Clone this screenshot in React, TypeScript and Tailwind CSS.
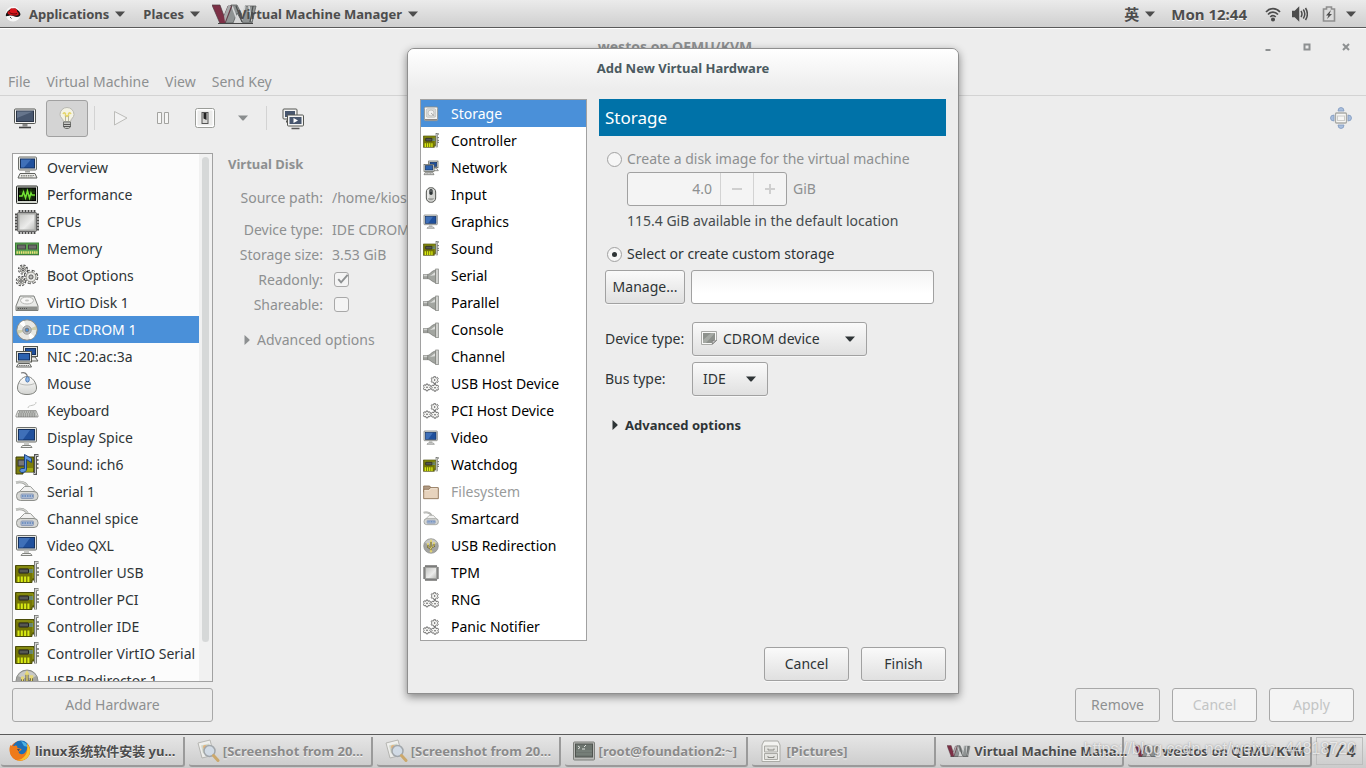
import type { ReactNode } from "react";

type IconName =
  | "computer"
  | "graph"
  | "chip"
  | "ram"
  | "gears"
  | "disk"
  | "cd"
  | "network"
  | "mouse"
  | "keyboard"
  | "display"
  | "soundCard"
  | "serial"
  | "card"
  | "usb"
  | "storage"
  | "input"
  | "plug"
  | "cogs"
  | "folder";

const HARDWARE: { label: string; icon: IconName }[] = [
  { label: "Overview", icon: "computer" },
  { label: "Performance", icon: "graph" },
  { label: "CPUs", icon: "chip" },
  { label: "Memory", icon: "ram" },
  { label: "Boot Options", icon: "gears" },
  { label: "VirtIO Disk 1", icon: "disk" },
  { label: "IDE CDROM 1", icon: "cd" },
  { label: "NIC :20:ac:3a", icon: "network" },
  { label: "Mouse", icon: "mouse" },
  { label: "Keyboard", icon: "keyboard" },
  { label: "Display Spice", icon: "display" },
  { label: "Sound: ich6", icon: "soundCard" },
  { label: "Serial 1", icon: "serial" },
  { label: "Channel spice", icon: "serial" },
  { label: "Video QXL", icon: "display" },
  { label: "Controller USB", icon: "card" },
  { label: "Controller PCI", icon: "card" },
  { label: "Controller IDE", icon: "card" },
  { label: "Controller VirtIO Serial", icon: "card" },
  { label: "USB Redirector 1", icon: "usb" },
];

const NEW_HARDWARE: { label: string; icon: IconName; disabled?: boolean }[] = [
  { label: "Storage", icon: "storage" },
  { label: "Controller", icon: "card" },
  { label: "Network", icon: "network" },
  { label: "Input", icon: "input" },
  { label: "Graphics", icon: "display" },
  { label: "Sound", icon: "card" },
  { label: "Serial", icon: "plug" },
  { label: "Parallel", icon: "plug" },
  { label: "Console", icon: "plug" },
  { label: "Channel", icon: "plug" },
  { label: "USB Host Device", icon: "cogs" },
  { label: "PCI Host Device", icon: "cogs" },
  { label: "Video", icon: "display" },
  { label: "Watchdog", icon: "card" },
  { label: "Filesystem", icon: "folder", disabled: true },
  { label: "Smartcard", icon: "serial" },
  { label: "USB Redirection", icon: "usb" },
  { label: "TPM", icon: "chip" },
  { label: "RNG", icon: "cogs" },
  { label: "Panic Notifier", icon: "cogs" },
];

const CHIP_PINS = [4.5, 7.5, 10.5, 13.5, 16.5, 19.5];

function Gear({ x, y, r }: { x: number; y: number; r: number }) {
  return (
    <g transform={`translate(${x} ${y})`}>
      <circle r={r} fill="none" stroke="#4a4a4a" strokeWidth="3" strokeDasharray={`${r * 0.48} ${r * 0.3054}`} />
      <circle r={r - 0.2} fill="none" stroke="#e4e4e1" strokeWidth="1.6" strokeDasharray={`${r * 0.36} ${r * 0.4254}`} />
      <circle r={r - 0.9} fill="#e9e9e6" stroke="#77776f" strokeWidth="0.7" />
      <circle r={r * 0.36} fill="#b9b9b6" stroke="#444" strokeWidth="0.8" />
    </g>
  );
}

function Cog({ x, y }: { x: number; y: number }) {
  return (
    <g transform={`translate(${x} ${y})`}>
      <path
        d="M-1.4 -5h2.8v1.6l1.6 .4 1.2-.9 1.2 2.2-1 .9v1.6l1 .9-1.2 2.2-1.2-.9-1.6.8v1.5h-2.8v-1.5l-1.6-.8-1.2.9-1.2-2.2 1-.9v-1.6l-1-.9 1.2-2.2 1.2.9 1.6-.4z"
        fill="#f4f4f2"
        stroke="#4d4d4d"
        strokeWidth="1.1"
      />
      <circle r="1.1" fill="#444" />
    </g>
  );
}

const DRAWINGS: Record<IconName, ReactNode> = {
  computer: (
    <>
      <rect x="3.5" y="1" width="18" height="13" rx="1" fill="#e3e4e0" stroke="#6b6d69" />
      <rect x="5.5" y="3" width="14" height="9" fill="#20509c" stroke="#14305f" />
      <path d="M6 3.5h10L9 11.5H6z" fill="#4d7dc4" opacity="0.7" />
      <path d="M10 14.5h5v2h-5z" fill="#a5a7a3" />
      <path d="M5 17.5h15l2 4.5H3z" fill="#ececea" stroke="#5f615d" />
      <path d="M6 19.5h13M6 21h12" stroke="#85877f" strokeDasharray="1.5 .8" />
    </>
  ),
  graph: (
    <>
      <rect x="1.5" y="3" width="21" height="17.5" rx="1" fill="#d3d7cf" stroke="#2c2e2b" />
      <rect x="3.5" y="5" width="17" height="12.5" fill="#11220a" stroke="#000" />
      <path d="M4 9h16M4 13h16M8 5.5v12M12 5.5v12M16 5.5v12" stroke="#285512" strokeWidth=".7" />
      <path d="M4 13h3l1.5-4 2 6 2-7 2 7 1.5-5 1 2H20" fill="none" stroke="#73e234" strokeWidth="1.5" />
    </>
  ),
  chip: (
    <>
      <g stroke="#4c4c4a" strokeWidth="1.8">
        {CHIP_PINS.map((p) => (
          <path key={p} d={`M${p} 0v24M0 ${p}h24`} />
        ))}
      </g>
      <rect x="2.5" y="2.5" width="19" height="19" rx="1" fill="#a8a9a6" stroke="#666" />
      <rect x="4.5" y="4.5" width="15" height="15" fill="url(#silver)" />
    </>
  ),
  ram: (
    <>
      <rect x=".5" y="6" width="23" height="11.5" fill="#5ba350" stroke="#3c8038" />
      <rect x="2.5" y="8" width="8" height="4" fill="#6c6e6a" stroke="#444" />
      <rect x="13.5" y="8" width="8" height="4" fill="#6c6e6a" stroke="#444" />
      <path d="M1.5 15.5h21" stroke="#f1e379" strokeWidth="2.6" strokeDasharray="1.4 .8" />
      <path d="M0 18.5h24" stroke="#c9cac7" />
    </>
  ),
  gears: (
    <>
      <Gear x={8} y={5.5} r={3.6} />
      <Gear x={6} y={17} r={3.8} />
      <Gear x={16} y={13} r={5.8} />
    </>
  ),
  disk: (
    <>
      <path d="M5 5h14l4 10v4.500H1V15z" fill="#e9eae8" stroke="#7c7e7a" />
      <ellipse cx="12" cy="9.5" rx="6.5" ry="3.5" fill="#f7f7f6" stroke="#b5b6b3" />
      <ellipse cx="12" cy="9.5" rx="2" ry="1" fill="#c3c4c1" />
      <path d="M1.5 15.5h21V19h-21z" fill="#8e908c" />
      <path d="M3 17.5h9" stroke="#555" strokeDasharray="1 1" />
    </>
  ),
  cd: (
    <>
      <circle cx="12" cy="12" r="10.2" fill="#e8e8e3" stroke="#8a8a84" />
      <path d="M12 12L4.5 5.5A10 10 0 0 1 9 2.8zM12 12l7.500 6.500a10 10 0 0 1-4.500 2.800z" fill="#fff" />
      <path d="M12 12L21 8a10 10 0 0 1 .8 4zM12 12L3 16a10 10 0 0 1-.8-4z" fill="#cfcfae" />
      <circle cx="12" cy="12" r="4.2" fill="#b9c0c8" stroke="#9b9b97" />
      <circle cx="12" cy="12" r="1.9" fill="#4a90d9" stroke="#777" />
    </>
  ),
  network: (
    <>
      <rect x="8.5" y="1.5" width="14" height="10" fill="#e3e4e0" stroke="#55574f" />
      <rect x="10.5" y="3.5" width="10" height="6" fill="#20509c" stroke="#14305f" />
      <path d="M14 12h6l3 4H12z" fill="#ececea" stroke="#5f615d" />
      <rect x="1.5" y="6.5" width="15" height="10.5" fill="#e3e4e0" stroke="#55574f" />
      <rect x="3.5" y="8.5" width="11" height="6.5" fill="#2c62b0" stroke="#14305f" />
      <path d="M3.5 18.5h11l2 3.5h-15z" fill="#ececea" stroke="#5f615d" />
      <path d="M4 20.5h10" stroke="#777" strokeDasharray="1.5 .7" />
    </>
  ),
  mouse: (
    <>
      <path d="M6 1c3-1 6 0 6.500 4" fill="none" stroke="#777" strokeWidth="1.2" />
      <path
        d="M12 4.500c5 0 9.500 6 9.500 11.500 0 4.500-4 6.500-9.500 6.500S2.500 20.500 2.500 16C2.500 10.500 7 4.500 12 4.500z"
        fill="url(#paper)"
        stroke="#80827e"
      />
      <path d="M4.500 11.500c4 2 11 2 15 0" fill="none" stroke="#b9bab7" />
      <ellipse cx="12.5" cy="7.5" rx="1.8" ry="2.6" fill="#8db6e8" stroke="#4a78b4" />
    </>
  ),
  keyboard: (
    <>
      <path d="M13 9c0-4 8-1 8-6" fill="none" stroke="#c4c5c2" />
      <path d="M3 11.500h18l2 5v1.500H1v-1.500z" fill="#d9dad7" stroke="#8a8c88" strokeWidth=".8" />
      <path d="M4 13h16.500M3 15h18M3 17h18.500" stroke="#5f615d" strokeWidth="1.2" strokeDasharray="1.700 .5" />
    </>
  ),
  display: (
    <>
      <rect x="1.5" y="1.5" width="20" height="14.5" rx="1" fill="#e3e4e0" stroke="#6b6d69" />
      <rect x="3.5" y="3.5" width="16" height="10.5" fill="#20509c" stroke="#14305f" />
      <path d="M4 4h11L8 13.500H4z" fill="#4d7dc4" opacity="0.7" />
      <path d="M9 16.500h5v3H9z" fill="#c7c8c5" />
      <path d="M7.500 19.500h8l1.500 2H6z" fill="#f2f2f1" stroke="#80827e" />
    </>
  ),
  soundCard: (
    <>
      <path d="M1 4h18v15H8v2H1z" fill="#7b7d0c" stroke="#3b3c08" />
      <rect x="3" y="7" width="7" height="6" fill="#777" stroke="#333" />
      <path d="M10 18h8M11 16h7" stroke="#c8d51b" />
      <path d="M23.500 2.500h-3v18h-2" fill="none" stroke="#555" strokeWidth="3" />
      <path d="M23.500 2.500h-3v18h-1.500" fill="none" stroke="#c9cac7" />
      <path d="M21.500 7h2M21.500 11h2M21.500 15h2" stroke="#555" strokeWidth="1.5" />
      <path
        d="M9.500 15.500v-14l7 4v4l-5-3v9.500c0 2.500-2 3.500-4.500 3.500s-3.500-3.500 0-4z"
        fill="#5d94dc"
        stroke="#1e4480"
      />
    </>
  ),
  serial: (
    <>
      <path d="M1 2.500c5-1 10 0 12 5" fill="none" stroke="#9b9d99" strokeWidth="2.5" />
      <path d="M1 2.200c5-1 10 0 12 5" fill="none" stroke="#d5d6d3" strokeWidth="1.2" />
      <path d="M9.500 6.500h6l6 6.500H3z" fill="#f0f0ef" stroke="#9b9d99" />
      <rect x="1.5" y="11.5" width="21.5" height="9" rx="4" fill="#d6d7d4" stroke="#8e908c" />
      <rect x="6" y="14" width="12.5" height="4.5" rx="1" fill="#a9b8d2" stroke="#8d9cb8" />
      <path d="M7 16h11" stroke="#5f86bd" strokeWidth="1.6" strokeDasharray="1.500 1" />
    </>
  ),
  card: (
    <>
      <path d="M.5 4.500h18.500V19H17v2.500H.5z" fill="#737506" stroke="#4a4c08" />
      <path d="M2 6h16v11" fill="none" stroke="#98a01a" />
      <rect x="4" y="8" width="9.5" height="4" rx=".5" fill="#555753" stroke="#222" />
      <path d="M14 9h4M14 11h4" stroke="#5d94dc" />
      <path
        d="M3.500 15.500v5.500M6.800 15.500v5.500M10.100 15.500v5.500M13.400 15.500v5.500"
        stroke="#d7ea14"
        strokeWidth="2"
      />
      <path d="M23.500 1.500h-3v20" fill="none" stroke="#6c6e6a" strokeWidth="3" />
      <path d="M23.500 1.500h-3v20" fill="none" stroke="#d3d4d1" strokeWidth="1.3" />
      <path d="M21.500 7h2.500M21.500 11h2.500M21.500 14h2.500" stroke="#6c6e6a" strokeWidth="1.5" />
    </>
  ),
  usb: (
    <>
      <circle cx="12" cy="12" r="11" fill="#a3a4a1" stroke="#8b8d89" />
      <path d="M3 7a10.500 10.500 0 0 1 18 0c-5 3-13 3-18 0z" fill="#c8c9c6" />
      <path
        d="M12 4v16M7.500 9v4l4.500 3.500M16.500 8v4L12 14.500"
        fill="none"
        stroke="#5c5636"
        strokeWidth="3"
      />
      <g stroke="#e6d877" strokeWidth="1.4" fill="#e6d877">
        <path d="M12 4v16M7.500 9v4l4.500 3.500M16.500 8v4L12 14.500" fill="none" />
        <path d="M12 2.500l1.500 2.500h-3z" />
        <circle cx="7.5" cy="9" r="1" />
        <path d="M15.500 7h2v1.500h-2z" />
        <circle cx="12" cy="20" r="1.3" />
      </g>
    </>
  ),
  storage: (
    <>
      <rect x="2" y="1.5" width="20" height="20.5" rx="2" fill="#f4f4f3" stroke="#8b8d89" strokeWidth="1.4" />
      <rect x="5" y="4" width="14" height="13" rx="2" fill="#d9dad8" stroke="#bbbcba" />
      <circle cx="12" cy="10.5" r="4.5" fill="#f2f2f1" stroke="#b0b1af" />
      <path d="M12 10.500l5 4.500" stroke="#aaa" strokeWidth="1.5" />
      <path d="M3 20.500h18" stroke="#77706b" strokeWidth="1.5" />
    </>
  ),
  input: (
    <>
      <rect x="5" y="1" width="14" height="22" rx="6.5" fill="#d2d3d0" stroke="#555753" strokeWidth="1.5" />
      <path d="M7.500 4v14" stroke="#fff" strokeWidth="1.5" />
      <rect x="9.5" y="3" width="5" height="9" rx="2.5" fill="#2e3436" />
      <path d="M12 4.500v3" stroke="#aaa" />
      <path d="M7 17c2 4 8 4 10 0z" fill="#9c9e9a" />
    </>
  ),
  plug: (
    <>
      <path d="M0 10h7v6H0z" fill="#9fa19d" stroke="#7c7e7a" />
      <path d="M1 11.500h7" stroke="#dcdddb" strokeWidth="1.5" />
      <path d="M7 9.500c4 0 5-5 12-6.500v19c-7-2-8-6-12-6z" fill="#a2a5a0" stroke="#6f716d" />
      <path d="M10 12c3-1 5-4 8-5.500V11z" fill="#dddedc" />
      <rect x="19" y="1.5" width="4" height="22" fill="#d0d1ce" stroke="#7c7e7a" />
    </>
  ),
  cogs: (
    <>
      <Cog x={17.5} y={6} />
      <Cog x={6} y={17} />
      <Cog x={18} y={17.5} />
    </>
  ),
  folder: (
    <>
      <path d="M1 3h9l2 3h10v6H1z" fill="#b09a83" stroke="#8a6f54" strokeWidth="1.3" />
      <path d="M1 8h8l2-2.500h12V22H1z" fill="#e7d3bd" stroke="#8a6f54" strokeWidth="1.3" />
      <path d="M2.500 9.500h7l2-2.500h10" fill="none" stroke="#f8eee2" />
    </>
  ),
};

function Icon({ name, className }: { name: IconName; className: string }) {
  return (
    <svg viewBox="0 0 24 24" className={className} aria-hidden="true">
      {DRAWINGS[name]}
    </svg>
  );
}

function Caret({ className = "" }: { className?: string }) {
  return (
    <svg viewBox="0 0 10 6" className={`h-[6px] w-[10px] shrink-0 ${className}`} aria-hidden="true">
      <path d="M0 .5h10L5.500 5.500h-1z" fill="currentColor" />
    </svg>
  );
}

function RightCaret() {
  return (
    <svg viewBox="0 0 6 10" className="h-[10px] w-[6px] shrink-0" aria-hidden="true">
      <path d="M.5 0L5.500 4.500v1L.5 10z" fill="currentColor" />
    </svg>
  );
}

// a red V followed by two slanted metal strokes
function VmmLogo({ className }: { className: string }) {
  return (
    <svg viewBox="0 0 46 20" className={className} preserveAspectRatio="none" aria-hidden="true">
      <path d="M12 19L19 1h6l6 12 2-11h11l-4 17h-9l-6-10-4 10z" fill="#8f9393" stroke="#5b5e5e" strokeWidth=".8" />
      <path d="M20 2l6 16M33 2l-4 16M37 2l2 15" stroke="#d5d7d7" strokeWidth="1.6" />
      <path d="M24 2l6 16M41 2l-3 16" stroke="#4b4e4e" strokeWidth="1.2" />
      <path d="M0 1h8l4 11 4-10h4l-7 17.500H8z" fill="#7d3046" stroke="#4c3a40" strokeWidth=".7" />
      <path d="M12 12l4-10h3l-6 16z" fill="#a9adad" />
      <path d="M6 19.500h35" stroke="#444" />
    </svg>
  );
}

function RedHat() {
  return (
    <svg viewBox="0 0 16 16" className="mr-[2px] size-4" aria-hidden="true">
      <circle cx="8" cy="8" r="7.5" fill="#f7f7f7" />
      <path d="M.8 10A7.500 7.500 0 0 1 15.500 8c0 2-1.500 3-3.500 3-3 0-4-2-7-1.500-2 .4-3 1-4.200.5z" fill="#161616" />
      <path
        d="M2.500 7c0-1.500 1.300-2 2.200-1.600C4.800 3.500 5.500 1.800 7 2.300c1 .3 1.500.2 2.500 0 2-.3 2.500 1.700 2.800 3.700 1.800.8 2.200 3.200-.6 3.500C8 9.700 3 9 2.500 7z"
        fill="#d7141a"
      />
      <path d="M4.500 6.500c2 1.500 5 2 7.500 1" fill="none" stroke="#5c0709" />
      <path d="M5 11l1.500 1.500" stroke="#444" />
    </svg>
  );
}

function TopBar() {
  return (
    <header className="flex h-7 shrink-0 items-center border-b border-[#5a5a5a] bg-linear-to-b from-[#ebebeb] to-[#cfcfcf] text-[13px] font-bold text-[#4d4d4d] [text-shadow:0_1px_0_#f8f8f8]">
      <nav className="flex items-center">
        <button type="button" className="flex items-center gap-[6px] pl-[5px]">
          <RedHat />
          Applications
          <Caret />
        </button>
        <button type="button" className="ml-[18px] flex items-center gap-[6px]">
          Places
          <Caret />
        </button>
        <button type="button" className="ml-3 flex items-center">
          <VmmLogo className="h-5 w-[46px]" />
          <span className="-ml-5 mr-[6px]">Virtual Machine Manager</span>
          <Caret />
        </button>
      </nav>
      <div className="ml-auto flex items-center pr-[10px]">
        <button type="button" className="flex items-center gap-[6px] text-[15px]">
          英
          <Caret />
        </button>
        <time className="mr-[18px] ml-4 text-[15px]">Mon 12:44</time>
        <svg viewBox="0 0 16 16" className="size-4" fill="none" stroke="#4d4d4d" strokeWidth="1.7" aria-label="Wireless">
          <path d="M1 6c4-4.500 10-4.500 14 0M3 8.500c3-3.300 7-3.300 10 0M5.300 11c1.600-1.800 3.800-1.800 5.400 0" />
          <circle cx="8" cy="13.5" r="1.2" fill="#4d4d4d" />
        </svg>
        <svg
          viewBox="0 0 16 16"
          className="ml-[11px] size-4"
          fill="none"
          stroke="#4d4d4d"
          strokeWidth="1.5"
          aria-label="Volume"
        >
          <path d="M.5 5.500H3L6.500 2v12L3 10.500H.5z" fill="#4d4d4d" />
          <path d="M9 5c1.300 2 1.300 4 0 6M11.300 3.500c2 3 2 6 0 9M13.500 2c2.500 4 2.500 8 0 12" />
        </svg>
        <svg viewBox="0 0 14 16" className="ml-[14px] h-4 w-[14px]" aria-label="Battery charging">
          <path d="M4.500 1h5v2h3v12h-11V3h3z" fill="#dcdcdc" stroke="#8e8e8e" strokeWidth="1.6" />
          <path d="M9 4L4 9.500h2.500L5 13l5-5H7.500z" fill="#4d4d4d" />
        </svg>
        <Caret className="ml-[10px]" />
      </div>
    </header>
  );
}

function Toolbar() {
  return (
    <div className="flex h-11 items-center pl-1 text-[#8a8d8e]">
      <button type="button" aria-label="Console" className="grid h-[37px] w-[42px] place-items-center">
        <svg viewBox="0 0 24 24" className="size-6">
          <rect x="1.5" y="3" width="21" height="14.5" rx="1" fill="#f3f3f2" stroke="#555753" />
          <rect x="3.5" y="5" width="17" height="10.5" fill="#47566e" stroke="#2c3648" />
          <path d="M4 5.500h16L4 12z" fill="#66758c" />
          <path d="M9.500 18h5v2.500h-5z" fill="#888" />
          <path d="M6 21.500h12" stroke="#444" strokeWidth="1.6" />
        </svg>
      </button>
      <button
        type="button"
        aria-label="Details"
        aria-pressed="true"
        className="grid h-[37px] w-[42px] place-items-center rounded-[3px] border border-[#a1a1a1] bg-[#d4d4d4]"
      >
        <svg viewBox="0 0 24 24" className="size-6">
          <path
            d="M12 1.500a7 7 0 0 1 7 7c0 3-3 4-3.500 7h-7c-.5-3-3.500-4-3.500-7a7 7 0 0 1 7-7z"
            fill="#f4f3e4"
            stroke="#b9b9b3"
          />
          <path
            d="M8 8c1-2 3-1 2.500 1s1.500 2 1.500 0M12 9c0 2 2 2 1.500 0S15 6 16 8"
            fill="none"
            stroke="#e6d66b"
            strokeWidth="1.5"
          />
          <path d="M10.500 10v5M13.500 10v5" stroke="#b9b69d" />
          <path d="M8.500 16h7v5l-2 1.500h-3l-2-1.500z" fill="#c6c7c4" stroke="#70726e" />
          <path d="M8.500 18.500h7M8.500 20.500h7" stroke="#555" />
        </svg>
      </button>
      <span className="mx-[6px] h-6 w-px bg-[#d3d3d3]" />
      <button type="button" aria-label="Run" disabled className="grid w-10 place-items-center">
        <svg viewBox="0 0 16 16" className="size-4">
          <path d="M1.500 1.500v13.500L14 8z" fill="#f3f3f3" stroke="#bcbcb9" />
        </svg>
      </button>
      <button type="button" aria-label="Pause" disabled className="grid w-11 place-items-center">
        <svg viewBox="0 0 16 16" className="size-4">
          <path d="M2.500 2.500h4v11h-4zM9.500 2.500h4v11h-4z" fill="#f6f6f5" stroke="#a3a3a0" />
        </svg>
      </button>
      <button type="button" aria-label="Shut down" className="grid w-10 place-items-center">
        <svg viewBox="0 0 22 22" className="size-[22px]">
          <rect x="1.5" y="1.5" width="19" height="19" rx="2" fill="#fff" stroke="#9b9d99" />
          <rect x="3.5" y="3.5" width="15" height="15" fill="#ececeb" />
          <rect x="8" y="5.5" width="6" height="11" fill="#d9d9d7" stroke="#555" />
          <path d="M9.500 6h3v7l-3-1.500z" fill="#222" />
        </svg>
      </button>
      <button type="button" aria-label="Shut down options" className="grid w-9 place-items-center">
        <Caret />
      </button>
      <span className="mx-[5px] h-6 w-px bg-[#d3d3d3]" />
      <button type="button" aria-label="Snapshots" className="grid h-[37px] w-[42px] place-items-center">
        <svg viewBox="0 0 24 24" className="size-6">
          <rect x="2" y="3" width="14" height="10" rx="1" fill="#f3f3f2" stroke="#555753" />
          <rect x="4" y="5" width="10" height="6" fill="#47566e" />
          <path d="M5 15.500h2" stroke="#555" strokeWidth="2" />
          <rect x="6.5" y="9" width="16" height="11" rx="1" fill="#f3f3f2" stroke="#555753" />
          <rect x="8.5" y="11" width="12" height="7" fill="#47566e" />
          <path d="M12.500 12v5l4.500-2.500z" fill="#fff" />
          <path d="M10.500 22.500h8" stroke="#555" strokeWidth="1.5" />
        </svg>
      </button>
      <button type="button" aria-label="Fullscreen" className="mr-[13px] ml-auto">
        <svg viewBox="0 0 24 24" className="size-6">
          <path
            d="M9 5a3 3.500 0 0 1 6 0zM9 19a3 3.500 0 0 0 6 0zM5 9a3.500 3 0 0 0 0 6zM19 9a3.500 3 0 0 1 0 6z"
            fill="#a9bfdd"
            stroke="#8099bf"
            strokeWidth=".8"
          />
          <rect x="6.5" y="7" width="11" height="10" rx="1" fill="#f6f6f4" stroke="#a9aaa6" strokeWidth="1.3" />
          <rect x="8.5" y="10" width="7" height="4.5" fill="none" stroke="#ccccc9" />
        </svg>
      </button>
    </div>
  );
}

function HardwareList() {
  return (
    <aside className="flex w-[201px] shrink-0 flex-col gap-[6px]">
      <div className="flex min-h-0 flex-1 overflow-hidden border border-[#a1a1a1] bg-[#fcfcfc]">
        <ul className="min-w-0 flex-1">
          {HARDWARE.map((item) => (
            <li key={item.label}>
              <button
                type="button"
                className={`flex h-[27px] w-full items-center gap-2 pl-[2px] text-left whitespace-nowrap ${
                  item.label === "IDE CDROM 1" ? "bg-[#4a90d9] text-white" : "text-[#2e3436]"
                }`}
              >
                <Icon name={item.icon} className="size-6 shrink-0" />
                {item.label}
              </button>
            </li>
          ))}
        </ul>
        <div className="w-[13px] shrink-0 bg-[#f1f1f1] px-[3px] py-[3px]">
          <div className="h-[93%] rounded-full bg-[#d6d8d8]" />
        </div>
      </div>
      <button type="button" className="h-[34px] shrink-0 rounded-[3px] border border-[#a8a8a8] text-[#8d9091]">
        Add Hardware
      </button>
    </aside>
  );
}

const CHECKBOX = "size-[15px] appearance-none rounded-[3px] border border-[#a8a8a8] bg-[#f4f4f4]";

function DiskDetails() {
  return (
    <section className="pt-px text-[#8d9091]">
      <h2 className="text-[13px] font-bold">Virtual Disk</h2>
      <dl className="mt-[11px] grid grid-cols-[95px_auto] gap-x-[9px] leading-[25px]">
        <dt className="mb-[7px] text-right">Source path:</dt>
        <dd>/home/kiosk</dd>
        <dt className="text-right">Device type:</dt>
        <dd>IDE CDROM</dd>
        <dt className="text-right">Storage size:</dt>
        <dd>3.53 GiB</dd>
        <dt className="text-right">
          <label htmlFor="readonly">Readonly:</label>
        </dt>
        <dd className="flex items-center pl-[2px]">
          <input id="readonly" type="checkbox" defaultChecked className={CHECKBOX} />
          <svg viewBox="0 0 16 16" className="pointer-events-none -ml-[14px] size-[15px]" aria-hidden="true">
            <path d="M3.500 7.500l3 3.500 7-8" fill="none" stroke="#8d9091" strokeWidth="2" />
          </svg>
        </dd>
        <dt className="text-right">
          <label htmlFor="shareable">Shareable:</label>
        </dt>
        <dd className="flex items-center pl-[2px]">
          <input id="shareable" type="checkbox" className={CHECKBOX} />
        </dd>
      </dl>
      <button type="button" className="mt-[13px] ml-4 flex items-center gap-[7px]">
        <RightCaret />
        Advanced options
      </button>
    </section>
  );
}

const RAISED =
  "h-[34px] rounded-[3px] border border-[#a1a1a1] bg-linear-to-b from-[#fafafa] to-[#e0e0e0] text-[#2e3436] shadow-[0_1px_0_#f8f8f8]";

const RADIO =
  "grid size-[15px] shrink-0 appearance-none place-items-center rounded-full border border-[#a1a1a1] bg-[#f6f6f6] checked:before:size-[5px] checked:before:rounded-full checked:before:bg-[#2e3436]";

function StoragePage() {
  return (
    <section className="flex min-w-0 flex-1 flex-col text-[#2e3436]">
      <h2 className="flex h-[37px] items-center bg-[#0072a8] px-[6px] text-[17px] text-white">Storage</h2>

      <div className="flex flex-col pt-3 pr-3 pl-2">
        <label className="flex h-[22px] items-center gap-[5px] text-[#8d9091]">
          <input type="radio" name="source" className={RADIO} />
          Create a disk image for the virtual machine
        </label>
        <div className="mt-[2px] ml-5 flex items-center gap-[6px] text-[#8d9091]">
          <div className="flex h-[34px] w-[160px] rounded-[3px] border border-[#a1a1a1] bg-[#f4f4f4] text-[#8d9091]">
            <input
              aria-label="Disk size"
              type="text"
              defaultValue="4.0"
              className="w-[92px] bg-transparent pr-2 text-right outline-none"
            />
            <button type="button" aria-label="Decrease" className="grid flex-1 place-items-center border-l border-[#d3d3d3]">
              <svg viewBox="0 0 10 10" className="size-[10px]">
                <path d="M0 5h10" stroke="#cfcfcf" strokeWidth="2" />
              </svg>
            </button>
            <button type="button" aria-label="Increase" className="grid flex-1 place-items-center border-l border-[#d3d3d3]">
              <svg viewBox="0 0 10 10" className="size-[10px]">
                <path d="M0 5h10M5 0v10" stroke="#cfcfcf" strokeWidth="2" />
              </svg>
            </button>
          </div>
          GiB
        </div>
        <p className="mt-[5px] ml-5 text-[#454b4d]">115.4 GiB available in the default location</p>
        <label className="mt-3 flex h-[22px] items-center gap-[5px]">
          <input type="radio" name="source" defaultChecked className={RADIO} />
          Select or create custom storage
        </label>
        <div className="mt-[5px] -ml-[2px] flex gap-[6px]">
          <button type="button" className={`${RAISED} w-20`}>
            Manage...
          </button>
          <input
            aria-label="Storage path"
            type="text"
            className="h-[34px] min-w-0 flex-1 rounded-[3px] border border-[#a1a1a1] bg-linear-to-b from-[#f4f4f4] to-white to-70% px-2 outline-none"
          />
        </div>
      </div>

      <div className="mt-[18px] grid grid-cols-[87px_auto] items-center justify-start gap-y-[6px] pl-[6px]">
        <label htmlFor="device-type">Device type:</label>
        <div className="relative w-[175px]">
          <select id="device-type" className={`${RAISED} w-full appearance-none pl-[30px]`}>
            <option>CDROM device</option>
            <option>Disk device</option>
          </select>
          <svg viewBox="0 0 16 14" className="pointer-events-none absolute top-[9px] left-[9px] h-[14px] w-4">
            <path d="M.5 .5h15v9L11.500 13.500H.5z" fill="#f8f8f7" stroke="#a9aaa7" />
            <path d="M2 2h12v7l-3 3H2z" fill="#8d918c" />
            <path d="M2 9L10 2h4L5 12H2z" fill="#a5a9a4" />
            <path d="M11 13c1-1 .5-2 0-3.500 1.500.5 3 .5 4.500 0z" fill="#ddd" stroke="#777" strokeWidth=".8" />
          </svg>
          <Caret className="pointer-events-none absolute top-[14px] right-3" />
        </div>
        <label htmlFor="bus-type">Bus type:</label>
        <div className="relative w-[76px]">
          <select id="bus-type" className={`${RAISED} w-full appearance-none pl-[10px]`}>
            <option>IDE</option>
            <option>SCSI</option>
          </select>
          <Caret className="pointer-events-none absolute top-[14px] right-3" />
        </div>
      </div>

      <button type="button" className="mt-[19px] flex items-center gap-[7px] pl-[13px] text-[13px] font-bold">
        <RightCaret />
        Advanced options
      </button>
    </section>
  );
}

function AddHardwareDialog() {
  return (
    <div
      role="dialog"
      aria-labelledby="dialog-title"
      className="absolute top-[19px] left-1/2 w-[552px] -translate-x-1/2 rounded-t-[7px] border border-[#8f8f8f] bg-[#ededed] shadow-[0_3px_8px_rgba(0,0,0,0.45)]"
    >
      <h1
        id="dialog-title"
        className="flex h-10 items-center justify-center rounded-t-[6px] bg-linear-to-b from-white to-[#ededed] pb-[2px] text-[13px] font-bold text-[#4b5a60]"
      >
        Add New Virtual Hardware
      </h1>
      <div className="px-3 pt-[10px] pb-3">
        <div className="flex gap-3">
          <ul className="w-[167px] shrink-0 border border-[#a1a1a1] bg-white">
            {NEW_HARDWARE.map((item, i) => (
              <li key={item.label}>
                <button
                  type="button"
                  disabled={item.disabled}
                  className={`flex h-[27px] w-full items-center gap-3 pl-[2px] text-left whitespace-nowrap ${
                    i === 0 ? "bg-[#4a90d9] text-white" : item.disabled ? "text-[#999b9b]" : "text-black"
                  }`}
                >
                  <Icon name={item.icon} className="size-4 shrink-0" />
                  {item.label}
                </button>
              </li>
            ))}
          </ul>
          <StoragePage />
        </div>
        <div className="mt-[6px] flex justify-end gap-3">
          <button type="button" className={`${RAISED} w-[85px]`}>
            Cancel
          </button>
          <button type="button" className={`${RAISED} w-[85px]`}>
            Finish
          </button>
        </div>
      </div>
    </div>
  );
}

const TASKS: { title: string; kind: "firefox" | "viewer" | "terminal" | "files" | "vmm"; dim?: boolean }[] = [
  { title: "linux系统软件安装 yu...", kind: "firefox" },
  { title: "[Screenshot from 20...", kind: "viewer", dim: true },
  { title: "[Screenshot from 20...", kind: "viewer", dim: true },
  { title: "[root@foundation2:~]", kind: "terminal", dim: true },
  { title: "[Pictures]", kind: "files", dim: true },
  { title: "Virtual Machine Mana...", kind: "vmm" },
  { title: "westos on QEMU/KVM", kind: "vmm" },
];

function TaskIcon({ kind }: { kind: (typeof TASKS)[number]["kind"] }) {
  if (kind === "vmm") return <VmmLogo className="h-3 w-6 shrink-0" />;
  return (
    <svg viewBox="0 0 24 24" className="size-6 shrink-0" aria-hidden="true">
      {kind === "firefox" && (
        <>
          <circle cx="12" cy="12" r="10" fill="#e6661b" />
          <circle cx="13" cy="10" r="8.5" fill="#1c70b8" />
          <path d="M13 2c4 1 6 3 7 6l-4-1z" fill="#4fb4e3" />
          <path
            d="M2.500 6c1 1 2 1 4 1 2-1 3 0 3 2l4 1c0 2-3 2-3 3 1 3 5 3 7 0 3-4 2-7 1-9 4 3 5 9 2 13-4 6-13 6-17 0C1 13 1 9 2.500 6z"
            fill="#ef7a1a"
          />
          <path d="M19 5c4 4 4 10 0 14-3 3-8 3-10 2 6 0 12-6 10-16z" fill="#fbc12d" />
          <path d="M9 10l3 .5-1.500 1.500z" fill="#123c6e" />
        </>
      )}
      {kind === "viewer" && (
        <g opacity="0.75">
          <path d="M2 4l12-3 4 15-12 3z" fill="#f5f5f2" stroke="#a9a9a4" />
          <path d="M5 6.500l8-2 2 8-8 2z" fill="#cfd6c2" />
          <circle cx="9" cy="8" r="2" fill="#e6a45a" />
          <circle cx="13.5" cy="12" r="5.5" fill="#cfdcea" stroke="#8f969c" strokeWidth="1.5" />
          <path d="M17.500 16.500l4.500 5" stroke="#c99a4a" strokeWidth="3" strokeLinecap="round" />
        </g>
      )}
      {kind === "terminal" && (
        <>
          <rect x="1.5" y="3" width="21" height="18" rx="1" fill="#b9bab7" stroke="#7d7f7b" />
          <rect x="3.5" y="5" width="17" height="13" fill="#6d756f" stroke="#505550" />
          <path d="M4 12h16M4 15h16" stroke="#7f8881" />
          <path d="M6 7l2 1.500L6 10M10 10h3M12 8l2-2" fill="none" stroke="#e0e4e0" />
        </>
      )}
      {kind === "files" && (
        <>
          <path d="M5 2h14l2 4v16.500H3V6z" fill="#f3f3f0" stroke="#aaaaa5" />
          <path d="M5.500 7h13v6h-13zM5.500 14.500h13v6h-13z" fill="#e3e3df" stroke="#aaaaa5" />
          <path d="M9 9.500v1.500h6V9.500M9 17v1.500h6V17" fill="none" stroke="#8a8a85" />
        </>
      )}
    </svg>
  );
}

function Taskbar() {
  return (
    <footer className="relative flex h-[34px] shrink-0 gap-1 border-t border-[#5a5a5a] bg-linear-to-b from-[#e6e6e6] to-[#cbcbcb] pt-[2px] pr-[3px] pb-px pl-px text-[13px] font-bold">
      {TASKS.map((task, i) => (
        <button
          key={i}
          type="button"
          className={`flex min-w-0 flex-1 items-center gap-[3px] rounded-b-[3px] border-r-2 border-b-2 border-[#9a9a9a] pl-[7px] whitespace-nowrap [text-shadow:0_1px_0_#f4f4f4] ${
            task.dim ? "text-[#8a8a8a]" : "text-[#4d4d4d]"
          }`}
        >
          <TaskIcon kind={task.kind} />
          {task.title}
        </button>
      ))}
      <div className="mb-[2px] grid w-[47px] place-items-center border border-[#bdbdbd] text-[16px] text-[#4d4d4d] italic">
        1 / 4
      </div>
      <span className="pointer-events-none absolute right-[10px] bottom-[9px] font-['Liberation_Sans'] text-[16px] font-normal text-white/70 [text-shadow:0_0_2px_rgba(0,0,0,0.35)]">
        https://blog.csdn.net/weixin_44818720
      </span>
    </footer>
  );
}

export default function App() {
  return (
    <div className="flex h-screen min-h-[740px] flex-col overflow-hidden bg-[#ededed] font-['Noto_Sans','Noto_Sans_CJK_SC',sans-serif] text-[14px] leading-5">
      <svg className="absolute size-0" aria-hidden="true">
        <defs>
          <linearGradient id="silver" x1="0" y1="0" x2="1" y2="1">
            <stop offset="0" stopColor="#c4c5c2" />
            <stop offset="0.6" stopColor="#ececeb" />
            <stop offset="1" stopColor="#bdbebb" />
          </linearGradient>
          <linearGradient id="paper" x1="0" y1="0" x2="0" y2="1">
            <stop offset="0" stopColor="#ffffff" />
            <stop offset="1" stopColor="#d3d4d1" />
          </linearGradient>
        </defs>
      </svg>

      <TopBar />

      <main className="relative flex min-h-0 flex-1 flex-col border-t border-white">
        <div className="flex h-9 shrink-0 items-center text-[#8d9091]">
          <span className="flex-1" />
          <h1 className="text-[14px] font-bold">westos on QEMU/KVM</h1>
          <div className="flex flex-1 items-center justify-end gap-[31px] pr-4">
            <button type="button" aria-label="Minimize">
              <svg viewBox="0 0 8 8" className="size-2">
                <path d="M1.500 7h5" stroke="#8d9091" strokeWidth="2" />
              </svg>
            </button>
            <button type="button" aria-label="Maximize">
              <svg viewBox="0 0 8 8" className="size-2">
                <path d="M1.500 1.500h5v5h-5z" fill="none" stroke="#8d9091" strokeWidth="2" />
              </svg>
            </button>
            <button type="button" aria-label="Close">
              <svg viewBox="0 0 8 8" className="size-2">
                <path d="M1 1l6 6M7 1L1 7" stroke="#8d9091" strokeWidth="2" />
              </svg>
            </button>
          </div>
        </div>

        <nav className="flex h-[31px] shrink-0 items-center gap-4 border-b border-[#d3d3d3] pt-[3px] pl-2 text-[#8d9091]">
          <button type="button">File</button>
          <button type="button">Virtual Machine</button>
          <button type="button">View</button>
          <button type="button">Send Key</button>
        </nav>

        <Toolbar />

        <div className="flex min-h-0 flex-1 gap-[15px] px-3 pt-[13px] pb-3">
          <HardwareList />
          <DiskDetails />
          <div className="ml-auto flex gap-3 self-end">
            <button type="button" className="h-[34px] w-[85px] rounded-[3px] border border-[#a8a8a8] text-[#8d9091]">
              Remove
            </button>
            <button
              type="button"
              disabled
              className="h-[34px] w-[85px] rounded-[3px] border border-[#a8a8a8] bg-[#f4f4f4] text-[#c3c5c5]"
            >
              Cancel
            </button>
            <button
              type="button"
              disabled
              className="h-[34px] w-[85px] rounded-[3px] border border-[#a8a8a8] bg-[#f4f4f4] text-[#c3c5c5]"
            >
              Apply
            </button>
          </div>
        </div>

        <AddHardwareDialog />
      </main>

      <Taskbar />
    </div>
  );
}
